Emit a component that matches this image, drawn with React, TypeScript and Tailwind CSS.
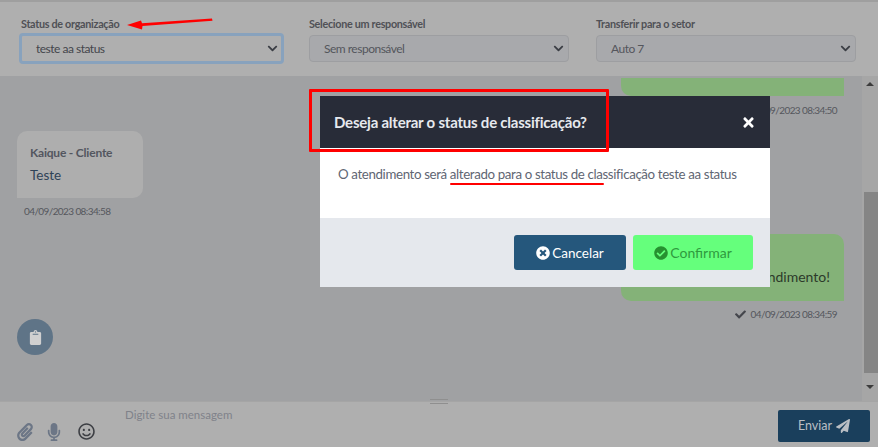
import { FaCheck, FaCheckCircle, FaChevronDown, FaClipboard, FaMicrophone, FaPaperclip, FaPaperPlane, FaRegSmile, FaTimes, FaTimesCircle } from "react-icons/fa";

const selects = [
  { label: "Status de organização", value: "teste aa status", width: "w-[265px]", focus: true },
  { label: "Selecione um responsável", value: "Sem responsável", width: "w-[260px]", focus: false },
  { label: "Transferir para o setor", value: "Auto 7", width: "w-[260px] ml-[2px]", focus: false },
];

function SelectField({ label, value, width, focus }: { label: string; value: string; width: string; focus: boolean }) {
  return (
    <div className={width}>
      <p className={`text-[10.8px] leading-[14px] font-bold tracking-[-0.3px] text-[#505156] ${focus ? "pl-[2px]" : ""}`}>{label}</p>
      <div
        className={
          focus
            ? "mt-[2px] h-[31px] rounded-[4px] border-[3px] border-[#88a2bd] bg-[#afafaf] flex items-center justify-between pl-[14px] pr-[3px] text-[12px] tracking-[-0.5px] text-[#44464c]"
            : "mt-[4px] h-[27px] rounded-[4px] border border-[#9d9ea1] bg-[#a8a9ac] flex items-center justify-between pl-[14px] pr-[4px] text-[12px] tracking-[-0.5px] text-[#54565c]"
        }
      >
        <span>{value}</span>
        <FaChevronDown size={11} className="text-[#3b3e45]" />
      </div>
    </div>
  );
}

export default function App() {
  return (
    <div className="relative h-[447px] w-[878px] overflow-hidden bg-[#a0a1a3] font-['Lato',sans-serif]">
      <header className="h-[76px] border-t-2 border-[#9f9f9f] bg-[#afafaf] pt-[15px] pl-[19px] flex gap-[25px]">
        {selects.map((s) => (
          <SelectField key={s.label} {...s} />
        ))}
      </header>

      <main className="relative h-[325px] flex">
        <div className="flex-1 pt-[2px] pl-[17px] pr-[18px] overflow-hidden">
          <div className="ml-auto h-[18px] w-[223px] rounded-bl-[10px] bg-[#84b278]" />
          <p className="mt-[7px] pr-[7px] h-[14px] text-right text-[10px] leading-[14px] tracking-[-0.6px] text-[#55575d]">04/09/2023 08:34:50</p>
          <div className="mt-[14px] h-[67px] w-[126px] rounded-[10px] rounded-bl-none bg-[#aeaeae] pl-[13px] pt-[14px]">
            <p className="text-[12px] leading-[16px] font-bold tracking-[-0.2px] text-[#53565f]">Kaique - Cliente</p>
            <p className="mt-[5px] text-[13.5px] leading-[18px] text-[#2e4257]">Teste</p>
          </div>
          <p className="mt-[6px] pl-[7px] h-[14px] text-[10px] leading-[14px] tracking-[-0.6px] text-[#55575d]">04/09/2023 08:34:58</p>
          <div className="mt-[16px] ml-auto h-[67px] w-[223px] rounded-[10px] rounded-br-none bg-[#84b278] pr-[14px] pt-[34px] text-right text-[14px] leading-[18px] text-[#2c3a2a]">
            Fim de atendimento!
          </div>
          <div className="mt-[6px] pr-[7px] flex h-[14px] items-center justify-end gap-[5px] text-[10px] leading-[14px] tracking-[-0.6px] text-[#55575d]">
            <FaCheck size={11} className="text-[#44464c]" />
            <span>04/09/2023 08:34:59</span>
          </div>
        </div>

        <div className="w-[16px] flex flex-col items-center bg-[#a6a6a6]">
          <div className="h-[15px] flex items-center justify-center">
            <div className="border-x-[4px] border-b-[4px] border-x-transparent border-b-[#3c3c3c]" />
          </div>
          <div className="mt-[101px] ml-[2px] h-[181px] w-[14px] bg-[#858585]" />
          <div className="flex-1 flex items-center justify-center">
            <div className="border-x-[4px] border-t-[4px] border-x-transparent border-t-[#3c3c3c]" />
          </div>
        </div>

        <button className="absolute left-[17px] top-[243px] flex h-[36px] w-[36px] items-center justify-center rounded-full bg-[#5f7487] text-[#d0d0d0]">
          <FaClipboard size={15} />
        </button>
      </main>

      <footer className="relative h-[46px] bg-[#afafaf] flex border-t border-[#a5a5a5]">
        <div className="absolute left-[430px] top-[-3px] h-[5px] w-[18px] border-y border-[#8f8f8f]" />
        <div className="flex items-center h-[46px] pl-[16px] pt-[13px]">
          <FaPaperclip size={18} className="text-[#6c7686]" />
          <FaMicrophone size={18} className="ml-[11px] text-[#6c7686]" />
          <FaRegSmile size={17} className="ml-[15px] text-[#3d3f44]" />
        </div>
        <p className="ml-[30px] pt-[5px] text-[11.5px] leading-[16px] text-[#7f828a]">Digite sua mensagem</p>
        <button className="absolute left-[778px] top-[8px] flex h-[32px] w-[92px] items-center justify-center gap-[4px] rounded-[2px] bg-[#1a3f5c] text-[12.5px] text-[#b9bec4]">
          Enviar
          <FaPaperPlane size={14} />
        </button>
      </footer>

      <div className="absolute left-[320px] top-[96px] w-[450px]">
        <div className="flex h-[52px] items-center justify-between bg-[#282c38] pl-[14px] pr-[14px]">
          <h2 className="text-[15px] font-bold tracking-[-0.22px] text-[#e6e9ee]">Deseja alterar o status de classificação?</h2>
          <FaTimes size={15} className="text-white" />
        </div>
        <div className="h-[70px] bg-white pl-[18px] pt-[17px] text-[13.3px] leading-[18px] tracking-[-0.37px] text-[#5f6673]">
          O atendimento será alterado para o status de classificação teste aa status
        </div>
        <div className="flex h-[69px] justify-end gap-[7px] bg-[#e5e8ed] pt-[17px] pr-[17px]">
          <button className="flex h-[35px] w-[112px] items-center justify-center gap-[2px] rounded-[3px] bg-[#25577c] text-[13.5px] leading-[18px] text-white">
            <FaTimesCircle size={14} />
            Cancelar
          </button>
          <button className="flex h-[35px] w-[120px] items-center justify-center gap-[2px] rounded-[3px] bg-[#65ff7c] text-[14px] leading-[18px] text-[#2f9a3e]">
            <FaCheckCircle size={14} className="text-[#26912f]" />
            Confirmar
          </button>
        </div>
      </div>

      <div className="pointer-events-none absolute left-[309px] top-[89px] h-[63px] w-[300px] border-[3px] border-[#ff0000] rounded-[1px]" />
      <div className="pointer-events-none absolute left-[450px] top-[183px] h-[2px] w-[154px] rounded-full bg-[#ff0000]" />
      <svg className="pointer-events-none absolute left-[125px] top-[16px]" width="90" height="16" viewBox="0 0 90 16">
        <path d="M2 9 L16 4.5 L17 7.2 L87 2.5 L87.5 4.8 L17.5 10 L17 13.5 Z" fill="#ff0000" />
      </svg>
    </div>
  );
}
